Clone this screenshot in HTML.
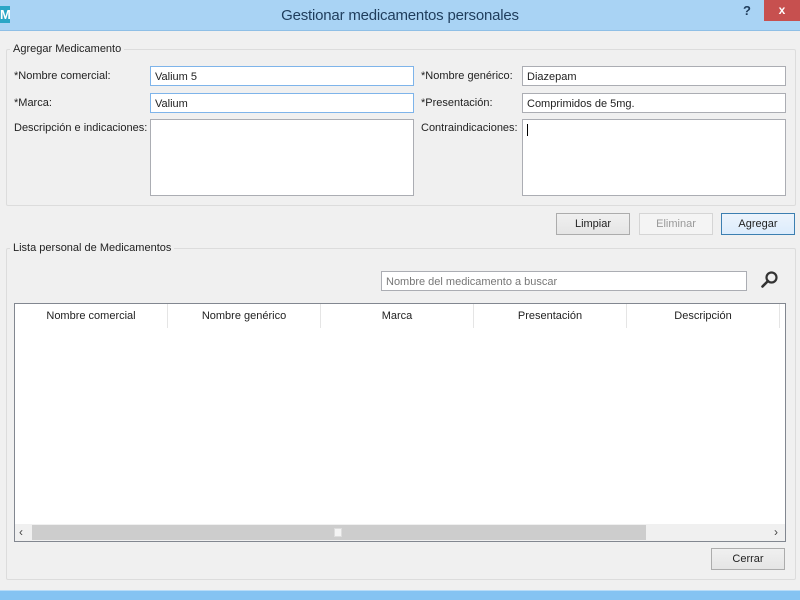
<!DOCTYPE html>
<html><head><meta charset="utf-8"><style>
*{margin:0;padding:0;box-sizing:border-box}
body{width:800px;height:600px;background:#f0f0f0;font-family:"Liberation Sans",sans-serif;font-size:11px;color:#222;position:relative;overflow:hidden}
.a{position:absolute}
.inp{position:absolute;background:#fff;border:1px solid #abadb3;height:20px;padding:4px 4px 2px;font-size:11px;white-space:nowrap}
.btn{position:absolute;height:22px;border:1px solid #acacac;background:linear-gradient(#f0f0f0,#e5e5e5);text-align:center;line-height:21px;font-size:11px}
.grp{position:absolute;border:1px solid #dcdcdc;border-radius:2px}
.gl{position:absolute;background:#f0f0f0;padding:0 3px;font-size:11px}
.th{position:absolute;top:0;height:24px;line-height:25px;text-align:center;border-right:1px solid #e5e5e5}
</style></head><body>
<div class="a" style="left:0;top:0;width:800px;height:31px;background:#a9d3f4;border-bottom:1px solid #8fbfe6"></div>
<div class="a" style="left:0;top:6px;width:10px;height:17px;background:#2aa6c6;color:#fff;font-weight:bold;font-size:13px;line-height:17px;overflow:hidden">M</div>
<div class="a" style="left:0;top:7px;width:800px;text-align:center;font-size:15px;color:#1f3d5c;letter-spacing:-0.2px">Gestionar medicamentos personales</div>
<div class="a" style="left:743px;top:3px;font-size:13px;font-weight:bold;color:#1f3d5c">?</div>
<div class="a" style="left:764px;top:0;width:36px;height:21px;background:#c7504f;color:#fff;text-align:center;font-size:12px;line-height:20px;font-weight:bold">x</div>

<div class="grp" style="left:6px;top:49px;width:790px;height:157px"></div>
<div class="gl" style="left:10px;top:43px">Agregar Medicamento</div>
<div class="a" style="left:14px;top:70px">*Nombre comercial:</div>
<div class="inp" style="left:150px;top:66px;width:264px;border-color:#7eb4ea">Valium 5</div>
<div class="a" style="left:421px;top:70px">*Nombre genérico:</div>
<div class="inp" style="left:522px;top:66px;width:264px">Diazepam</div>
<div class="a" style="left:14px;top:97px">*Marca:</div>
<div class="inp" style="left:150px;top:93px;width:264px;border-color:#7eb4ea">Valium</div>
<div class="a" style="left:421px;top:97px">*Presentación:</div>
<div class="inp" style="left:522px;top:93px;width:264px">Comprimidos de 5mg.</div>
<div class="a" style="left:14px;top:122px">Descripción e indicaciones:</div>
<div class="inp" style="left:150px;top:119px;width:264px;height:77px"></div>
<div class="a" style="left:421px;top:122px">Contraindicaciones:</div>
<div class="inp" style="left:522px;top:119px;width:264px;height:77px"><span style="display:inline-block;width:1px;height:12px;background:#000"></span></div>

<div class="btn" style="left:556px;top:213px;width:74px">Limpiar</div>
<div class="btn" style="left:639px;top:213px;width:74px;color:#999;border-color:#d5d5d5;background:#f4f4f4">Eliminar</div>
<div class="btn" style="left:721px;top:213px;width:74px;border-color:#3c7fb1;background:linear-gradient(#ecf4fc,#dcecfc)">Agregar</div>

<div class="grp" style="left:6px;top:248px;width:790px;height:332px"></div>
<div class="gl" style="left:10px;top:242px">Lista personal de Medicamentos</div>
<div class="inp" style="left:381px;top:271px;width:366px;color:#777">Nombre del medicamento a buscar</div>
<svg class="a" style="left:760px;top:270px" width="20" height="20" viewBox="0 0 20 20"><circle cx="11.5" cy="7.5" r="5" fill="none" stroke="#333" stroke-width="2.2"/><line x1="8" y1="11" x2="2.5" y2="16.5" stroke="#333" stroke-width="2.6" stroke-linecap="round"/></svg>

<div class="a" style="left:14px;top:303px;width:772px;height:239px;border:1px solid #828790;background:#fff">
<div class="th" style="left:0;width:153px">Nombre comercial</div>
<div class="th" style="left:153px;width:153px">Nombre genérico</div>
<div class="th" style="left:306px;width:153px">Marca</div>
<div class="th" style="left:459px;width:153px">Presentación</div>
<div class="th" style="left:612px;width:153px">Descripción</div>
<div class="a" style="left:0;top:220px;width:770px;height:17px;background:#f0f0f0"></div>
<div class="a" style="left:4px;top:221px;font-size:12px;color:#444">‹</div>
<div class="a" style="left:17px;top:221px;width:614px;height:15px;background:#cdcdcd"></div>
<div class="a" style="left:319px;top:224px;width:8px;height:9px;background:#f4f4f4;border:1px solid #ddd"></div>
<div class="a" style="left:759px;top:221px;font-size:12px;color:#444">›</div>
</div>

<div class="btn" style="left:711px;top:548px;width:74px">Cerrar</div>
<div class="a" style="left:0;top:590px;width:800px;height:10px;background:#85c3f2;border-top:1px solid #b8dcf8"></div>
</body></html>
